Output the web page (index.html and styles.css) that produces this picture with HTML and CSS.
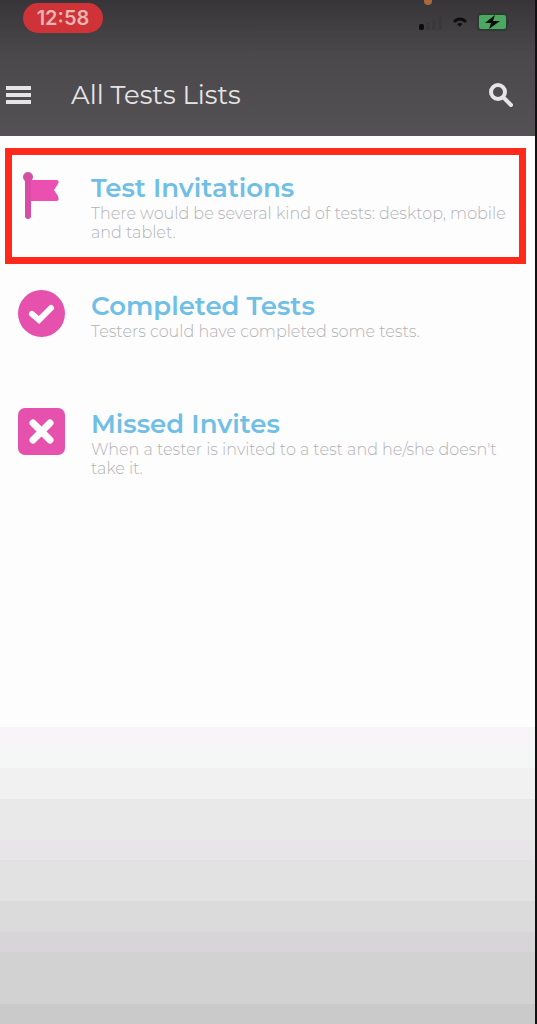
FILE: index.html
```html
<!DOCTYPE html>
<html lang="en">
<head>
    <meta charset="UTF-8">
    <meta name="viewport" content="width=device-width, initial-scale=1.0">
    <title>All Tests Lists</title>
    <link rel="stylesheet" href="styles.css">
</head>
<body>
    <div class="screen">
        <header class="header">
            <div class="status-bar">
                <span class="clock">12:58</span>
                <span class="mic-dot"></span>
                <div class="status-icons">
                    <svg width="24" height="15" viewBox="0 0 24 15">
                        <rect x="0" y="9" width="5" height="6" rx="2" fill="#0b0a0b"/>
                        <rect x="7" y="7" width="4" height="8" rx="1" fill="#3a383b"/>
                        <rect x="13" y="4" width="4" height="11" rx="1" fill="#3a383b"/>
                        <rect x="19" y="1" width="4" height="14" rx="1" fill="#3a383b"/>
                    </svg>
                    <svg width="14" height="10" viewBox="0 0 14 10" fill="none" stroke="#0e0d0e" stroke-linecap="round">
                        <path d="M2 4Q7 0 12 4" stroke-width="3"/>
                        <path d="M5 7Q7 6 9 7L7 9Z" stroke-width="1" fill="#0e0d0e"/>
                    </svg>
                    <svg width="32" height="18" viewBox="0 0 32 18">
                        <rect x="1" y="1" width="29" height="16" rx="3" fill="#4ba863" stroke="#2f3a32" stroke-width="2"/>
                        <path d="M30 6v6l2-1V7z" fill="#2b3a2e"/>
                        <path d="M18 2L8 10h6l-2 6 11-8h-7z" fill="#0a0d0a"/>
                    </svg>
                </div>
            </div>
            <div class="toolbar">
                <button type="button" class="icon-button" aria-label="Menu">
                    <svg width="26" height="20" viewBox="0 0 26 20" stroke="#e6e5e6" stroke-width="4">
                        <path d="M0 3h25M0 10h25M0 17h25"/>
                    </svg>
                </button>
                <h1>All Tests Lists</h1>
                <button type="button" class="icon-button" aria-label="Search">
                    <svg width="24" height="24" viewBox="0 0 24 24" fill="none" stroke="#e6e5e6" stroke-linecap="round">
                        <circle cx="9" cy="9" r="7" stroke-width="4"/>
                        <path d="M15 15l7 7" stroke-width="4"/>
                    </svg>
                </button>
            </div>
        </header>

        <main class="test-list">
            <a href="#invitations" class="test-item selected">
                <svg class="test-icon" viewBox="0 0 47 47">
                    <path d="M12 8h26q4 0 2 4l-4 6 4 6q2 5-2 5H12z" fill="#ea4fb1"/>
                    <circle cx="10" cy="5" r="5" fill="#cf559f"/>
                    <path d="M10 5v39" stroke="#d94ca5" stroke-width="6" stroke-linecap="round"/>
                </svg>
                <div class="test-text">
                    <h2>Test Invitations</h2>
                    <p>There would be several kind of tests: desktop, mobile and tablet.</p>
                </div>
            </a>
            <a href="#completed" class="test-item">
                <svg class="test-icon" viewBox="0 0 47 47">
                    <circle cx="23.500" cy="23.500" r="23.500" fill="#e651ae"/>
                    <path d="M14 24l7 6 12-12" fill="none" stroke="#fff" stroke-width="6" stroke-linecap="round"/>
                </svg>
                <div class="test-text">
                    <h2>Completed Tests</h2>
                    <p>Testers could have completed some tests.</p>
                </div>
            </a>
            <a href="#missed" class="test-item">
                <svg class="test-icon" viewBox="0 0 47 47">
                    <rect width="47" height="47" rx="7" fill="#e651ae"/>
                    <path d="M15 15l17 17M32 15L15 32" stroke="#fff" stroke-width="7" stroke-linecap="round"/>
                </svg>
                <div class="test-text">
                    <h2>Missed Invites</h2>
                    <p>When a tester is invited to a test and he/she doesn't take it.</p>
                </div>
            </a>
        </main>
    </div>
</body>
</html>
```

FILE: styles.css
```css
* {
    box-sizing: border-box;
}

body {
    margin: 0;
    font-family: Montserrat, Inter, sans-serif;
    background-color: #fdfdfd;
}

.screen {
    min-height: 100vh;
    border-right: 2px solid #111;
    background: linear-gradient(
        #fdfdfd 71%, #f7f5f8 71% 73%,
        #f5f7f6 73% 75%, #f1f1f1 75% 78%,
        #e9e9e9 78% 82%, #e7e5e8 82% 84%,
        #e2e2e2 84% 88%, #dbdbdb 88% 91%,
        #d7d5d8 91% 93%, #d2d2d2 93% 98%,
        #cacaca 98%
    );
}

.header {
    background: linear-gradient(#373538, #4a484b 40%, #545154);
    color: #e6e5e6;
}

.status-bar {
    position: relative;
    display: flex;
    align-items: center;
    justify-content: space-between;
    height: 36px;
    padding: 0 26px 0 23px;
}

.clock {
    width: 80px;
    height: 30px;
    border-radius: 15px;
    background-color: #cf3337;
    color: #e8b5b4;
    font-family: Inter, sans-serif;
    font-size: 20px;
    font-weight: 600;
    line-height: 30px;
    text-align: center;
}

.mic-dot {
    position: absolute;
    top: -3px;
    right: 103px;
    width: 8px;
    height: 8px;
    border-radius: 50%;
    background-color: #a9683c;
}

.status-icons {
    display: flex;
    align-items: center;
    gap: 10px;
    margin-top: 8px;
}

.toolbar {
    display: flex;
    align-items: center;
    height: 100px;
    padding: 18px 22px 0 6px;
}

.icon-button {
    display: flex;
    padding: 0;
    border: none;
    background: none;
    cursor: pointer;
}

h1 {
    flex: 1;
    margin: 0 0 0 39px;
    font-size: 26px;
    font-weight: 400;
    line-height: 32px;
}

.test-list {
    display: flex;
    flex-direction: column;
    gap: 2px;
    padding: 12px 9px 12px 5px;
}

.test-item {
    display: flex;
    gap: 26px;
    min-height: 116px;
    padding: 17px 6px 15px;
    border: 7px solid transparent;
    color: inherit;
    text-decoration: none;
}

.test-item.selected {
    border-color: #ff291c;
}

.test-icon {
    flex: none;
    width: 47px;
    height: 47px;
}

.test-text {
    flex: 1;
}

h2 {
    margin: 0;
    color: #70bfe6;
    font-size: 26px;
    font-weight: 600;
    line-height: 32px;
}

p {
    margin: 0;
    color: #b3b2b8;
    font-size: 16px;
    font-weight: 300;
    line-height: 19px;
}
```
